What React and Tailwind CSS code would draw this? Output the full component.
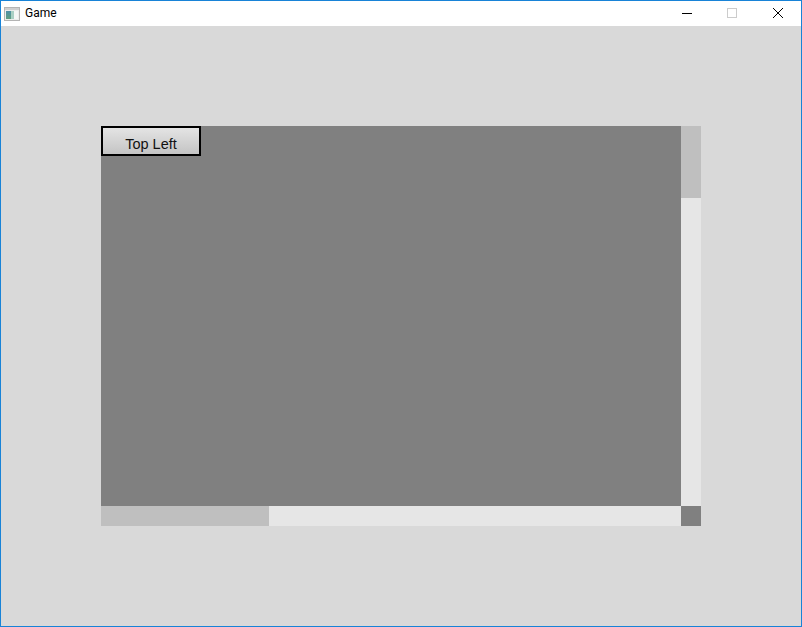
function AppIcon() {
  return (
    <svg width="16" height="16" viewBox="0 0 16 16" className="shrink-0">
      <defs>
        <linearGradient id="pane" x1="0" y1="0" x2="0" y2="1">
          <stop offset="0" stopColor="#4f8fa8" />
          <stop offset="1" stopColor="#5f9f80" />
        </linearGradient>
      </defs>
      <rect x="0.5" y="1.5" width="15" height="13" fill="#ececec" stroke="#b4b4b4" />
      <rect x="1" y="2" width="14" height="2" fill="#cfcfcf" />
      <rect x="2" y="5" width="5" height="8" fill="url(#pane)" />
      <rect x="7" y="5" width="3" height="8" fill="#a9cfc4" />
      <rect x="10" y="5" width="4" height="8" fill="#f4f6f6" />
    </svg>
  );
}

function TitleBar() {
  return (
    <div className="flex h-[25px] shrink-0 items-center bg-white">
      <div className="ml-[3px] flex">
        <AppIcon />
      </div>
      <span
        className="ml-[5px] pb-[2px] text-[12px] text-black"
        style={{ fontFamily: '"Roboto", sans-serif' }}
      >
        Game
      </span>
      <div className="ml-auto flex h-full items-center pb-px">
        <div className="flex w-[46px] items-center justify-center pl-[2px]">
          <svg width="10" height="10" viewBox="0 0 10 10">
            <path d="M0 5.5H10" stroke="#000" strokeWidth="1" fill="none" />
          </svg>
        </div>
        <div className="flex w-[46px] items-center justify-center">
          <div className="h-[10px] w-[10px] border border-[#cccccc]" />
        </div>
        <div className="flex w-[46px] items-center justify-center">
          <svg width="10" height="10" viewBox="0 0 10 10">
            <path d="M0 0L10 10M10 0L0 10" stroke="#000" strokeWidth="1" fill="none" />
          </svg>
        </div>
      </div>
    </div>
  );
}

export default function App() {
  return (
    <div className="flex h-[627px] w-[802px] flex-col overflow-hidden border border-[#1883d7] bg-[#d9d9d9]">
      <TitleBar />
      <div className="flex flex-1 items-start justify-start pl-[100px] pt-[100px]">
        <div className="grid h-[400px] w-[600px] grid-cols-[580px_20px] grid-rows-[380px_20px]">
          <div className="bg-[#808080]">
            <button
              className="flex h-[30px] w-[100px] items-center justify-center border-2 border-black bg-gradient-to-b from-[#e4e4e4] to-[#c4c4c4] pt-[7px] text-[14.5px] text-[#111111]"
              style={{ fontFamily: '"Liberation Sans", sans-serif' }}
            >
              Top Left
            </button>
          </div>
          <div className="bg-[#e6e6e6]">
            <div className="h-[72px] bg-[#bfbfbf]" />
          </div>
          <div className="bg-[#e6e6e6]">
            <div className="h-full w-[168px] bg-[#bfbfbf]" />
          </div>
          <div className="bg-[#808080]" />
        </div>
      </div>
    </div>
  );
}
